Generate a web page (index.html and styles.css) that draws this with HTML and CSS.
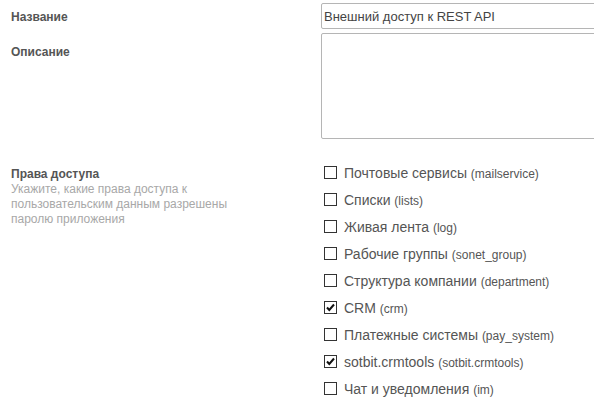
FILE: index.html
```html
<!DOCTYPE html>
<html>
<head>
<meta charset="utf-8">
<link rel="stylesheet" href="styles.css">
</head>
<body>
<div class="form">
  <div class="label label-name">Название</div>
  <div class="field"><div class="input">Внешний доступ к REST API</div></div>

  <div class="label label-desc">Описание</div>
  <div class="field"><div class="textarea"></div></div>

  <div class="label label-rights">
    <div class="title">Права доступа</div>
    <div class="hint">Укажите, какие права доступа к пользовательским данным разрешены паролю приложения</div>
  </div>
  <div class="field list">
    <div class="row"><span class="cb"></span><span class="txt">Почтовые сервисы <small>(mailservice)</small></span></div>
    <div class="row"><span class="cb"></span><span class="txt">Списки <small>(lists)</small></span></div>
    <div class="row"><span class="cb"></span><span class="txt">Живая лента <small>(log)</small></span></div>
    <div class="row"><span class="cb"></span><span class="txt">Рабочие группы <small>(sonet_group)</small></span></div>
    <div class="row"><span class="cb"></span><span class="txt">Структура компании <small>(department)</small></span></div>
    <div class="row"><span class="cb checked"><svg viewBox="0 0 11 11" width="11" height="11"><path d="M2 5.5 L4.3 8 L9 2.5" fill="none" stroke="#111" stroke-width="2"/></svg></span><span class="txt">CRM <small>(crm)</small></span></div>
    <div class="row"><span class="cb"></span><span class="txt">Платежные системы <small>(pay_system)</small></span></div>
    <div class="row"><span class="cb checked"><svg viewBox="0 0 11 11" width="11" height="11"><path d="M2 5.5 L4.3 8 L9 2.5" fill="none" stroke="#111" stroke-width="2"/></svg></span><span class="txt">sotbit.crmtools <small>(sotbit.crmtools)</small></span></div>
    <div class="row"><span class="cb"></span><span class="txt">Чат и уведомления <small>(im)</small></span></div>
  </div>
</div>
</body>
</html>
```

FILE: styles.css
```css
html, body {
  margin: 0;
  padding: 0;
  background: #fff;
  overflow: hidden;
}
body {
  font-family: "Liberation Sans", Arial, sans-serif;
  color: #555;
}
.form {
  display: grid;
  grid-template-columns: 310px 300px;
  padding: 3px 0 0 11px;
}
.label {
  font-size: 12px;
  font-weight: bold;
  color: #555;
}
.label-name {
  padding-top: 7px;
}
.label-desc {
  padding-top: 16px;
}
.field {
  display: flex;
}
.input {
  box-sizing: border-box;
  width: 300px;
  height: 26px;
  border: 1px solid #b5b5b5;
  border-radius: 2px;
  font-size: 13px;
  color: #444;
  padding: 5px 0 0 2px;
}
.textarea {
  box-sizing: border-box;
  width: 300px;
  height: 106px;
  margin-top: 4px;
  border: 1px solid #b5b5b5;
  border-radius: 2px;
}
.label-rights {
  padding-top: 28px;
}
.title {
  font-size: 12px;
  font-weight: bold;
  color: #555;
}
.hint {
  font-weight: normal;
  font-size: 12px;
  color: #a8a8a8;
  line-height: 15px;
  width: 240px;
  margin-top: 1px;
}
.list {
  flex-direction: column;
  padding-top: 20px;
  padding-left: 3px;
}
.row {
  display: flex;
  align-items: center;
  height: 27px;
}
.cb {
  box-sizing: border-box;
  width: 13px;
  height: 13px;
  border: 1px solid #333;
  display: flex;
  align-items: center;
  justify-content: center;
  background: #fff;
}
.txt {
  margin-left: 7px;
  font-size: 14px;
  color: #555;
}
.txt small {
  font-size: 12px;
}
```
